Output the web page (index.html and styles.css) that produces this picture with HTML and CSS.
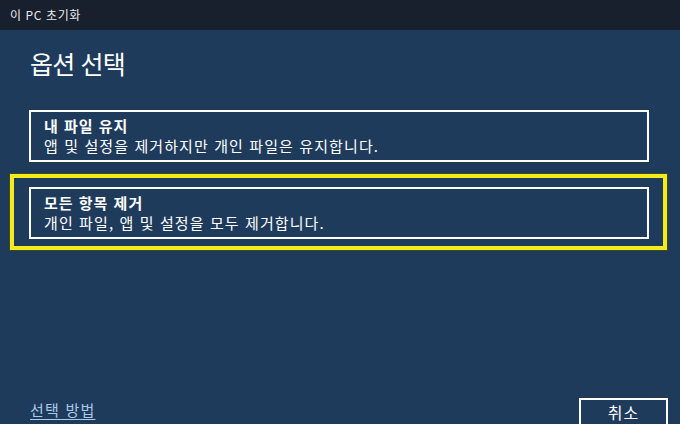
FILE: index.html
```html
<!DOCTYPE html>
<html lang="ko">
<head>
<meta charset="utf-8">
<title>이 PC 초기화</title>
<link rel="stylesheet" href="styles.css">
</head>
<body>
<div class="window">
  <div class="titlebar">이 PC 초기화</div>
  <main class="content">
    <h1 class="heading">옵션 선택</h1>
    <div class="option">
      <div class="option-title">내 파일 유지</div>
      <div class="option-desc">앱 및 설정을 제거하지만 개인 파일은 유지합니다.</div>
    </div>
    <div class="highlight">
      <div class="option">
        <div class="option-title">모든 항목 제거</div>
        <div class="option-desc">개인 파일, 앱 및 설정을 모두 제거합니다.</div>
      </div>
    </div>
  </main>
  <footer class="footer">
    <a class="help-link" href="#">선택 방법</a>
    <button class="cancel" type="button">취소</button>
  </footer>
</div>
</body>
</html>
```
FILE: styles.css
```css
html, body {
  margin: 0;
  padding: 0;
  height: 100%;
  overflow: hidden;
}
body {
  background: #1f3b5c;
  font-family: "Noto Sans CJK KR", "Noto Sans", sans-serif;
  color: #ffffff;
}
.window {
  height: 424px;
  display: flex;
  flex-direction: column;
}
.titlebar {
  height: 30px;
  flex: none;
  background: #17202c;
  color: #e6e8ec;
  font-size: 12px;
  letter-spacing: 0.6px;
  line-height: 30px;
  padding-left: 10px;
  box-sizing: border-box;
}
.content {
  flex: 1;
  padding: 0 31px 0 29px;
}
.heading {
  margin: 16px 0 0 1px;
  font-size: 25px;
  font-weight: 400;
  letter-spacing: -0.8px;
  line-height: 34px;
  height: 64px;
}
.option {
  border: 2px solid #ffffff;
  padding: 4px 13px;
  width: 620px;
  box-sizing: border-box;
}
.option-title {
  font-size: 15px;
  font-weight: 700;
  letter-spacing: 1px;
  line-height: 20px;
}
.option-desc {
  font-size: 15px;
  letter-spacing: 1.1px;
  line-height: 20px;
}
.highlight {
  margin: 12px 0 0 -19px;
  width: 657px;
  box-sizing: border-box;
  border: 4px solid #f5ea1c;
  box-shadow: 0 0 0 1px #3a4a2a;
  padding: 9px 14px 7px 15px;
}
.footer {
  flex: none;
  height: 26px;
  display: flex;
  justify-content: space-between;
  align-items: flex-start;
  padding: 0 12px 0 30px;
}
.help-link {
  color: #a9c9e8;
  font-size: 15px;
  letter-spacing: 1.2px;
  line-height: 20px;
  margin-top: 2px;
  text-decoration: underline;
  text-underline-offset: 3px;
}
.cancel {
  width: 89px;
  height: 34px;
  background: transparent;
  border: 2px solid #ffffff;
  color: #ffffff;
  font-family: inherit;
  font-size: 16px;
  letter-spacing: 1px;
  line-height: 20px;
  padding: 2px 0 0 0;
  box-sizing: border-box;
  display: flex;
  justify-content: center;
  align-items: flex-start;
}
```
